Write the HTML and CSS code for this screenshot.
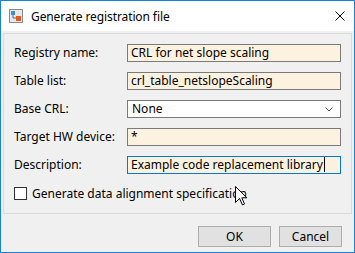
FILE: index.html
```html
<!DOCTYPE html>
<html lang="en">
<head>
  <meta charset="utf-8">
  <title>Generate registration file</title>
  <meta name="viewport" content="width=device-width,initial-scale=1">
  <link rel="stylesheet" href="styles.css">
</head>
<body>
  <div class="window">
    <!-- title bar -->
    <div class="titlebar">
      <svg class="app-icon" width="14" height="14" viewBox="0 0 14 14">
        <rect x="0.5" y="0.5" width="13" height="13" fill="#e8e8e8" stroke="#8a8a8a"/>
        <rect x="2" y="2" width="4" height="4" fill="#3a8fd8"/>
        <path d="M4 6 V9 H7" fill="none" stroke="#3a6fb0" stroke-width="1"/>
        <rect x="7" y="7" width="5" height="5" fill="#e0581c"/>
      </svg>
      <span class="title">Generate registration file</span>
      <svg class="close" width="10" height="10" viewBox="0 0 10 10">
        <path d="M0.5 0.5 L9.5 9.5 M9.5 0.5 L0.5 9.5" stroke="#000" stroke-width="1"/>
      </svg>
    </div>

    <div class="panel">
      <div class="form">
        <label>Registry name:</label>
        <div class="field">CRL for net slope scaling</div>

        <label>Table list:</label>
        <div class="field">crl_table_netslopeScaling</div>

        <label>Base CRL:</label>
        <div class="field select">None
          <svg class="chev" width="8" height="5" viewBox="0 0 8 5"><path d="M0.5 0.5 L4 4 L7.5 0.5" fill="none" stroke="#555"/></svg>
        </div>

        <label>Target HW device:</label>
        <div class="field">*</div>

        <label>Description:</label>
        <div class="field focus">Example code replacement library<span class="caret"></span></div>
      </div>

      <div class="check">
        <span class="box"></span>
        <span>Generate data alignment specification</span>
      </div>
    </div>

    <div class="btns">
      <button class="ok">OK</button>
      <button class="cancel">Cancel</button>
    </div>

    <!-- mouse pointer over the checkbox label -->
    <svg class="pointer" width="13" height="20" viewBox="0 0 13 20">
      <path d="M0.5 0.5 V16.5 L4.5 12.5 L7.5 19 L9.5 18 L6.8 11.8 H11.8 Z" fill="#fff" stroke="#000" stroke-width="1" stroke-linejoin="miter"/>
    </svg>
  </div>
</body>
</html>
```

FILE: styles.css
```css
/* RESET */
* { box-sizing:border-box; margin:0; padding:0; }
html, body { background:#fff; }
body { font-family:"Noto Sans", "Open Sans", sans-serif; font-size:12px; color:#000; }

/* WINDOW */
.window {
  position:relative;
  width:355px; height:253px;
  border:1px solid #1883d7;
  background:#f0f0f0;
  display:flex; flex-direction:column;
}

/* TITLE BAR */
.titlebar {
  height:30px; background:#fff;
  display:flex; align-items:center;
  padding:0 9px 0 8px;
}
.app-icon { margin-right:8px; }
.title { flex:1; font-size:12px; letter-spacing:-.1px; }

/* PANEL */
.panel {
  margin:2px 2px 0 2px;
  height:181px;
  border:1px solid #dadada;
  padding:10px 9px 0 10px;
}
.form {
  display:grid;
  grid-template-columns:113px 214px;
  row-gap:10px;
  align-items:center;
}
.form label { font-size:12px; line-height:18px; }
.field {
  position:relative;
  height:18px; line-height:16px;
  border:1px solid #7a7a7a;
  background:#fdf1df;
  padding:0 3px;
  white-space:nowrap; overflow:hidden;
}
.field.select { background:#fff; padding-left:4px; }
.field.focus { border-color:#0078d7; }
.chev { position:absolute; right:7px; top:6px; }
.caret {
  display:inline-block; width:1px; height:15px;
  background:#000; vertical-align:-3px; margin-left:1px;
}

/* CHECKBOX */
.check {
  display:flex; align-items:center; gap:5px;
  margin-top:13px; line-height:13px;
}
.box {
  width:13px; height:13px;
  border:1px solid #333; background:#fff;
}

/* BUTTONS */
.btns {
  display:flex; justify-content:flex-end; gap:8px;
  padding:12px 12px 0 0;
}
button {
  font:inherit; font-size:12px;
  height:21px;
  background:#e1e1e1; color:#000;
  border:1px solid #adadad;
}
.ok { width:73px; }
.cancel { width:63px; }

/* POINTER */
.pointer { position:absolute; left:234px; top:185px; }
```
